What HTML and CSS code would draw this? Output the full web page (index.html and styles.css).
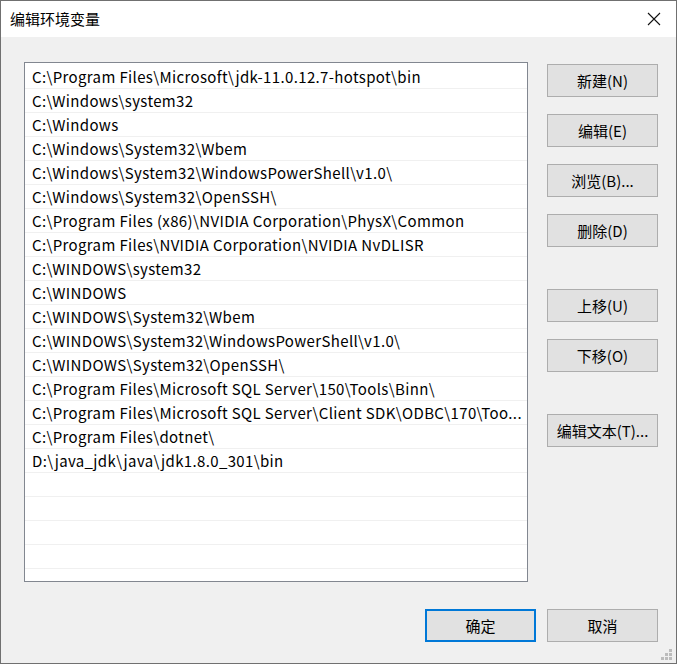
FILE: index.html
```html
<!DOCTYPE html>
<html lang="zh-CN">
<head>
  <meta charset="UTF-8">
  <title>编辑环境变量</title>
  <link rel="stylesheet" href="styles.css">
</head>
<body>
  <div class="window">
    <div class="titlebar">
      <span class="title">编辑环境变量</span>
      <svg class="close-icon" width="14" height="14" viewBox="0 0 14 14">
        <path d="M1 1L13 13M13 1L1 13" stroke="#111" stroke-width="1.1" fill="none"/>
      </svg>
    </div>

    <div class="content">
      <div class="main-row">
        <div class="path-list">
          <div class="path-row">C:\Program Files\Microsoft\jdk-11.0.12.7-hotspot\bin</div>
          <div class="path-row">C:\Windows\system32</div>
          <div class="path-row">C:\Windows</div>
          <div class="path-row">C:\Windows\System32\Wbem</div>
          <div class="path-row">C:\Windows\System32\WindowsPowerShell\v1.0\</div>
          <div class="path-row">C:\Windows\System32\OpenSSH\</div>
          <div class="path-row">C:\Program Files (x86)\NVIDIA Corporation\PhysX\Common</div>
          <div class="path-row">C:\Program Files\NVIDIA Corporation\NVIDIA NvDLISR</div>
          <div class="path-row">C:\WINDOWS\system32</div>
          <div class="path-row">C:\WINDOWS</div>
          <div class="path-row">C:\WINDOWS\System32\Wbem</div>
          <div class="path-row">C:\WINDOWS\System32\WindowsPowerShell\v1.0\</div>
          <div class="path-row">C:\WINDOWS\System32\OpenSSH\</div>
          <div class="path-row">C:\Program Files\Microsoft SQL Server\150\Tools\Binn\</div>
          <div class="path-row">C:\Program Files\Microsoft SQL Server\Client SDK\ODBC\170\Too...</div>
          <div class="path-row">C:\Program Files\dotnet\</div>
          <div class="path-row">D:\java_jdk\java\jdk1.8.0_301\bin</div>
          <div class="path-row"></div>
          <div class="path-row"></div>
          <div class="path-row"></div>
          <div class="path-row"></div>
          <div class="path-row"></div>
        </div>

        <div class="side-buttons">
          <button class="btn">新建(N)</button>
          <button class="btn">编辑(E)</button>
          <button class="btn">浏览(B)...</button>
          <button class="btn">删除(D)</button>
          <button class="btn btn-group-start">上移(U)</button>
          <button class="btn">下移(O)</button>
          <button class="btn btn-group-start">编辑文本(T)...</button>
        </div>
      </div>

      <div class="footer">
        <button class="btn btn-default">确定</button>
        <button class="btn">取消</button>
      </div>
    </div>

    <svg class="grip" width="12" height="12" viewBox="0 0 12 12">
      <rect x="8" y="0" width="3" height="3" fill="#bcbcbc"/>
      <rect x="4" y="4" width="3" height="3" fill="#bcbcbc"/>
      <rect x="8" y="4" width="3" height="3" fill="#bcbcbc"/>
      <rect x="0" y="8" width="3" height="3" fill="#bcbcbc"/>
      <rect x="4" y="8" width="3" height="3" fill="#bcbcbc"/>
      <rect x="8" y="8" width="3" height="3" fill="#bcbcbc"/>
    </svg>
  </div>
</body>
</html>
```

FILE: styles.css
```css
* {
  margin: 0;
  padding: 0;
  box-sizing: border-box;
}

body {
  font-family: "Noto Sans CJK SC", "Noto Sans", sans-serif;
  font-size: 15px;
  color: #000;
  background: #f0f0f0;
}

.window {
  position: relative;
  width: 677px;
  height: 664px;
  border: 1px solid #707070;
  background: #f0f0f0;
  overflow: hidden;
}

.titlebar {
  height: 36px;
  background: #fff;
  display: flex;
  align-items: center;
  justify-content: space-between;
  padding: 0 15px 0 9px;
}

.title {
  font-size: 15px;
  line-height: 20px;
}

.close-icon {
  display: block;
}

.content {
  padding: 25px 18px 0 23px;
}

.main-row {
  display: flex;
  gap: 19px;
}

.path-list {
  width: 504px;
  height: 520px;
  background: #fff;
  border: 1px solid #828790;
  padding-top: 2px;
  overflow: hidden;
}

.path-row {
  height: 24px;
  line-height: 23px;
  padding-left: 7px;
  border-bottom: 1px solid #f0f0f0;
  letter-spacing: 0.36px;
  white-space: nowrap;
  overflow: hidden;
}

.side-buttons {
  display: flex;
  flex-direction: column;
  gap: 17px;
  padding-top: 2px;
}

.btn {
  width: 111px;
  height: 33px;
  font-family: inherit;
  font-size: 15px;
  color: #000;
  background: #e1e1e1;
  border: 1px solid #adadad;
}

.btn-group-start {
  margin-top: 25px;
}

.btn-default {
  border: 2px solid #0078d7;
}

.footer {
  display: flex;
  justify-content: flex-end;
  gap: 11px;
  margin-top: 27px;
}

.grip {
  position: absolute;
  right: 3px;
  bottom: 2px;
}
```
